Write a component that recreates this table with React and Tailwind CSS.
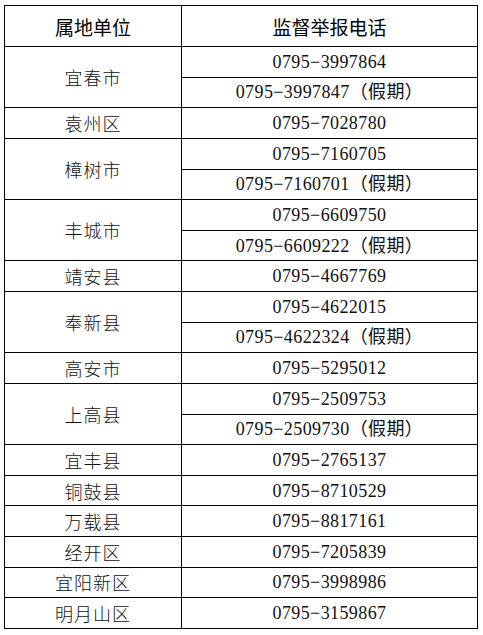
import React from "react";

const groups = [
  ["宜春市", ["0795−3997864", "0795−3997847（假期）"]],
  ["袁州区", ["0795−7028780"]],
  ["樟树市", ["0795−7160705", "0795−7160701（假期）"]],
  ["丰城市", ["0795−6609750", "0795−6609222（假期）"]],
  ["靖安县", ["0795−4667769"]],
  ["奉新县", ["0795−4622015", "0795−4622324（假期）"]],
  ["高安市", ["0795−5295012"]],
  ["上高县", ["0795−2509753", "0795−2509730（假期）"]],
  ["宜丰县", ["0795−2765137"]],
  ["铜鼓县", ["0795−8710529"]],
  ["万载县", ["0795−8817161"]],
  ["经开区", ["0795−7205839"]],
  ["宜阳新区", ["0795−3998986"]],
  ["明月山区", ["0795−3159867"]],
];

export default function App() {
  return (
    <div className="w-[483px] h-[635px] bg-white pl-[4px] pt-[5px] text-black font-['Liberation_Serif','Noto_Sans_CJK_SC',serif] text-[18px] leading-none">
      <div className="w-[474px] border-l border-t border-black">
        <div className="flex h-[41px]">
          <div className="w-[177px] border-r border-b border-black flex items-center justify-center font-['Noto_Sans_CJK_SC',sans-serif] text-[19px] font-normal">
            属地单位
          </div>
          <div className="w-[296px] border-r border-b border-black flex items-center justify-center font-['Noto_Sans_CJK_SC',sans-serif] text-[19px] font-normal">
            监督举报电话
          </div>
        </div>
        {groups.map(([name, phones]) => (
          <div key={name} className="flex">
            <div className="w-[177px] border-r border-b border-black flex items-center justify-center font-['Noto_Sans_CJK_SC',sans-serif] font-light tracking-[1px] text-[#111]">
              {name}
            </div>
            <div className="w-[296px] flex flex-col">
              {phones.map((p) => (
                <div
                  key={p}
                  className="h-[30.63px] border-r border-b border-black flex items-center justify-center tracking-[0.4px] text-[#111]"
                >
                  {p}
                </div>
              ))}
            </div>
          </div>
        ))}
      </div>
    </div>
  );
}
